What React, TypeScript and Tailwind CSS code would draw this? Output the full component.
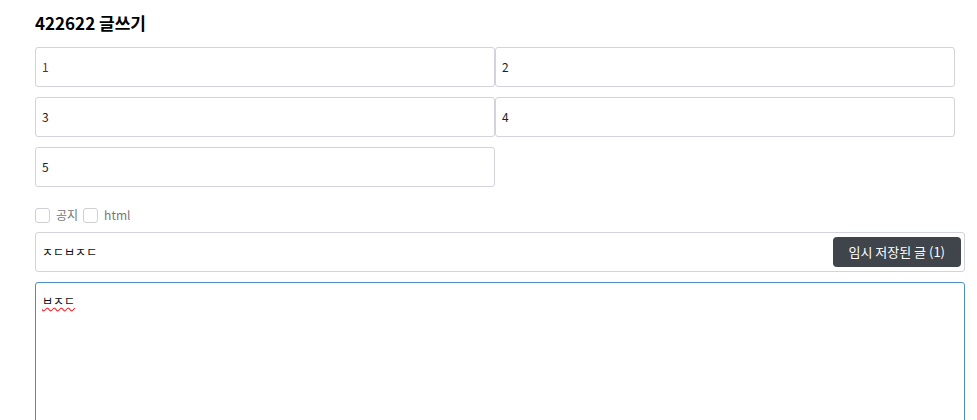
import React from "react";

const font = { fontFamily: '"Noto Sans CJK KR", "Noto Sans", sans-serif' };

const App = () => {
  return (
    <div className="bg-white w-[977px] h-[420px] overflow-hidden" style={font}>
      <div className="pl-[35px] pt-[11px]">
        {/* title */}
        <h1 className="text-[17px] font-bold text-black leading-[24px]">
          422622 글쓰기
        </h1>

        {/* inputs */}
        <div className="mt-[12px] grid grid-cols-[460px_460px] gap-y-[10px]">
          <div className="h-[40px] border border-[#d3d3dd] rounded-[3px] flex items-center px-[6px] text-[12px] text-[#8a1c1c]">
            1
          </div>
          <div className="h-[40px] border border-[#d3d3dd] rounded-[3px] flex items-center px-[6px] text-[12px] text-[#222]">
            2
          </div>
          <div className="h-[40px] border border-[#d3d3dd] rounded-[3px] flex items-center px-[6px] text-[12px] text-[#222]">
            3
          </div>
          <div className="h-[40px] border border-[#d3d3dd] rounded-[3px] flex items-center px-[6px] text-[12px] text-[#222]">
            4
          </div>
          <div className="h-[40px] border border-[#d3d3dd] rounded-[3px] flex items-center px-[6px] text-[12px] text-[#222]">
            5
          </div>
        </div>

        {/* checkboxes */}
        <div className="mt-[20px] flex items-center h-[16px] text-[12px] text-[#777]">
          <span className="w-[15px] h-[15px] border border-[#cfcfd6] rounded-[3px] bg-white"></span>
          <span className="ml-[6px]">공지</span>
          <span className="ml-[5px] w-[15px] h-[15px] border border-[#cfcfd6] rounded-[3px] bg-white"></span>
          <span className="ml-[6px]">html</span>
        </div>

        {/* subject */}
        <div className="mt-[9px] w-[930px] h-[40px] border border-[#d3d3dd] rounded-[3px] flex items-center justify-between pl-[6px] pr-[3px]">
          <span className="text-[12px] text-[#111]">ㅈㄷㅂㅈㄷ</span>
          <button className="h-[30px] px-[16px] rounded-[4px] bg-[#40454c] text-white text-[13px]">
            임시 저장된 글 (1)
          </button>
        </div>

        {/* content */}
        <div className="mt-[10px] w-[930px] h-[200px] border border-[#4f8ec4] rounded-[3px] px-[6px] pt-[4px]">
          <span className="text-[12px] text-[#111] underline decoration-wavy decoration-red-500">
            ㅂㅈㄷ
          </span>
        </div>
      </div>
    </div>
  );
};

export default App;
